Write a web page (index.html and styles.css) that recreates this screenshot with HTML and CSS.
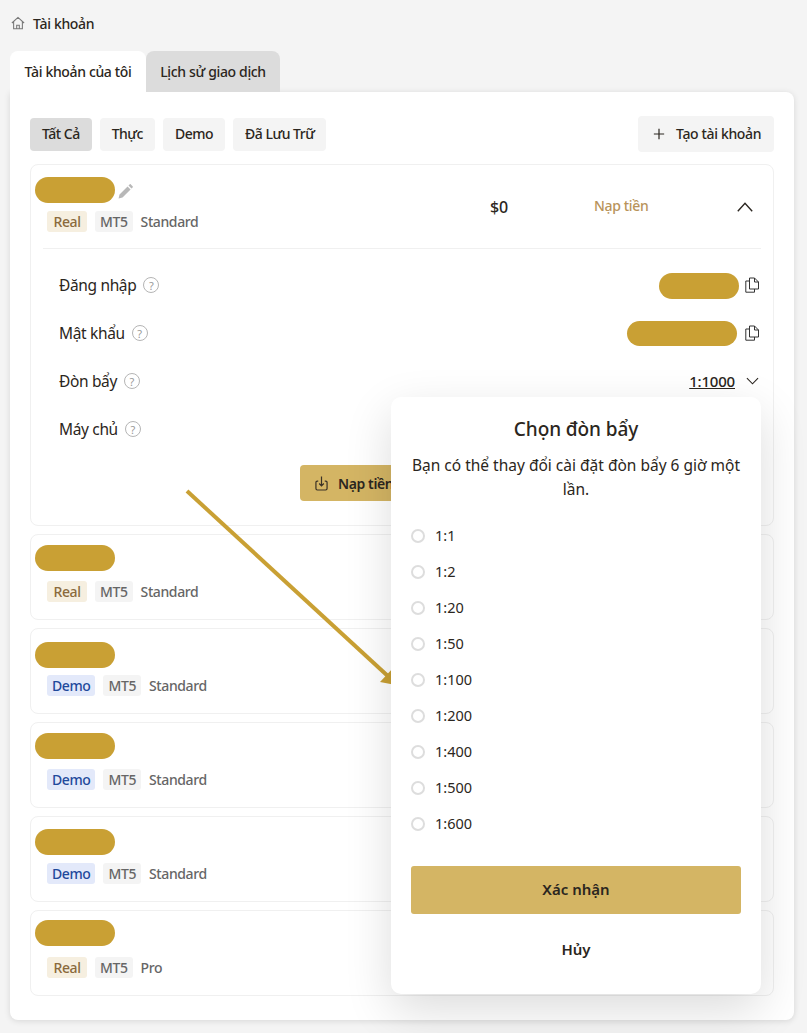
FILE: index.html
```html
<!DOCTYPE html>
<html>
<head>
<title>Tài khoản</title>
<link rel="stylesheet" href="styles.css">
</head>
<body>
<div class="breadcrumb">
  <svg class="home-icon" viewBox="0 0 16 16"><path d="M1 8 8 1.6 15 8M3 6.4V14.5H13V6.4M6.5 14.5V10.5H9.5V14.5"/></svg>
  <span>Tài khoản</span>
</div>

<div class="tabs">
  <div class="tab active">Tài khoản của tôi</div>
  <div class="tab">Lịch sử giao dịch</div>
</div>

<div class="panel">
  <div class="toolbar">
    <div class="filters">
      <div class="filter selected">Tất Cả</div>
      <div class="filter">Thực</div>
      <div class="filter">Demo</div>
      <div class="filter">Đã Lưu Trữ</div>
    </div>
    <div class="create-btn">
      <svg class="plus-icon" viewBox="0 0 14 14"><path d="M7 1V13M1 7H13"/></svg>
      <span>Tạo tài khoản</span>
    </div>
  </div>

  <div class="account open">
    <div class="account-head">
      <div class="account-info">
        <div class="name-slot slot-13">
          <div class="pill name-pill"></div>
          <svg class="pencil-icon" viewBox="0 0 16 16"><path d="M.6 15.4l1-4.2 8.6-8.6 3.2 3.2-8.6 8.6zM11.2 1.6 12.4.4c.4-.4.9-.4 1.3 0l1.9 1.9c.4.4.4.9 0 1.3l-1.2 1.2z"/></svg>
        </div>
        <div class="tags">
          <span class="tag real">Real</span>
          <span class="tag platform">MT5</span>
          <span class="plan">Standard</span>
        </div>
      </div>
      <div class="balance">$0</div>
      <div class="deposit-link">Nạp tiền</div>
      <svg class="chevron-up" viewBox="0 0 16 10"><path d="M.8 9.2 8 1.4l7.2 7.8"/></svg>
    </div>
    <div class="details">
      <div class="detail-row">
        <div class="detail-label">Đăng nhập <span class="help">?</span></div>
        <div class="detail-value">
          <div class="pill login-pill"></div>
          <svg class="copy-icon" viewBox="0 0 14 16"><path d="M4.5 1H9.5L13.5 5V12H4.5zM9.5 1V5H13.5M4.5 4H.8V15.2H9.5V12"/></svg>
        </div>
      </div>
      <div class="detail-row">
        <div class="detail-label">Mật khẩu <span class="help">?</span></div>
        <div class="detail-value">
          <div class="pill password-pill"></div>
          <svg class="copy-icon" viewBox="0 0 14 16"><path d="M4.5 1H9.5L13.5 5V12H4.5zM9.5 1V5H13.5M4.5 4H.8V15.2H9.5V12"/></svg>
        </div>
      </div>
      <div class="detail-row">
        <div class="detail-label">Đòn bẩy <span class="help">?</span></div>
        <div class="detail-value">
          <span class="leverage">1:1000</span>
          <svg class="chevron-down" viewBox="0 0 14 8"><path d="M1 1l6 6 6-6"/></svg>
        </div>
      </div>
      <div class="detail-row">
        <div class="detail-label">Máy chủ <span class="help">?</span></div>
      </div>
    </div>
    <div class="account-actions">
      <div class="deposit-btn">
        <svg class="deposit-icon" viewBox="0 0 14 16"><path d="M3.5 5.5H2.5Q1 5.5 1 7V13.5Q1 15 2.5 15H11.5Q13 15 13 13.5V7Q13 5.5 11.5 5.5H10.5M7 .5V10.5M4.5 8 7 10.5 9.5 8"/></svg>
        <span>Nạp tiền</span>
      </div>
    </div>
  </div>

  <div class="account">
    <div class="name-slot slot-11"><div class="pill name-pill"></div></div>
    <div class="tags"><span class="tag real">Real</span><span class="tag platform">MT5</span><span class="plan">Standard</span></div>
  </div>
  <div class="account">
    <div class="name-slot slot-14"><div class="pill name-pill"></div></div>
    <div class="tags"><span class="tag demo">Demo</span><span class="tag platform">MT5</span><span class="plan">Standard</span></div>
  </div>
  <div class="account">
    <div class="name-slot slot-11"><div class="pill name-pill"></div></div>
    <div class="tags"><span class="tag demo">Demo</span><span class="tag platform">MT5</span><span class="plan">Standard</span></div>
  </div>
  <div class="account">
    <div class="name-slot slot-13"><div class="pill name-pill"></div></div>
    <div class="tags"><span class="tag demo">Demo</span><span class="tag platform">MT5</span><span class="plan">Standard</span></div>
  </div>
  <div class="account">
    <div class="name-slot slot-10"><div class="pill name-pill"></div></div>
    <div class="tags"><span class="tag real">Real</span><span class="tag platform">MT5</span><span class="plan">Pro</span></div>
  </div>
</div>

<svg class="arrow" viewBox="0 0 807 1033"><path class="arrow-line" d="M187 491 390 678"/><path class="arrow-head" d="M401 686 380 682 394 667z"/></svg>

<div class="leverage-modal">
  <h2>Chọn đòn bẩy</h2>
  <p>Bạn có thể thay đổi cài đặt đòn bẩy 6 giờ một lần.</p>
  <div class="options">
    <div class="option"><span class="radio"></span>1:1</div>
    <div class="option"><span class="radio"></span>1:2</div>
    <div class="option"><span class="radio"></span>1:20</div>
    <div class="option"><span class="radio"></span>1:50</div>
    <div class="option"><span class="radio"></span>1:100</div>
    <div class="option"><span class="radio"></span>1:200</div>
    <div class="option"><span class="radio"></span>1:400</div>
    <div class="option"><span class="radio"></span>1:500</div>
    <div class="option"><span class="radio"></span>1:600</div>
  </div>
  <div class="confirm-btn">Xác nhận</div>
  <div class="cancel-btn">Hủy</div>
</div>
</body>
</html>
```

FILE: styles.css
```css
body {
  font-family: "Noto Sans", Roboto, sans-serif;
  background-color: #f4f4f4;
  color: #2b2620;
  margin: 0;
  padding: 0 13px 13px 10px;
  position: relative;
  height: 1020px;
  overflow: hidden;
}
svg {
  display: block;
  fill: none;
  flex-shrink: 0;
}

.breadcrumb {
  display: flex;
  align-items: center;
  gap: 8px;
  height: 46px;
  padding-left: 1px;
  font-size: 14px;
  font-weight: 500;
  letter-spacing: -0.35px;
}
.home-icon {
  width: 14px;
  height: 14px;
  stroke: #777;
  stroke-width: 1.2;
}

.tabs {
  display: flex;
  padding-top: 5px;
}
.tab {
  height: 41px;
  width: 134px;
  box-sizing: border-box;
  display: flex;
  align-items: center;
  justify-content: center;
  font-size: 14px;
  font-weight: 500;
  letter-spacing: -0.35px;
  background: #dcdcdc;
  border-radius: 8px 8px 0 0;
}
.tab.active {
  width: 136px;
  background: #fff;
}

.panel {
  background: #fff;
  border-radius: 0 8px 8px 8px;
  box-shadow: 0 1px 6px rgba(0, 0, 0, 0.12);
  padding: 24px 20px;
  height: 928px;
  box-sizing: border-box;
}
.toolbar {
  display: flex;
  justify-content: space-between;
  align-items: center;
  margin-bottom: 12px;
}
.filters {
  display: flex;
  gap: 8px;
}
.filter {
  height: 33px;
  padding: 0 12px 1px;
  box-sizing: border-box;
  display: flex;
  align-items: center;
  font-size: 14px;
  font-weight: 500;
  letter-spacing: -0.5px;
  background: #f4f4f4;
  border-radius: 4px;
}
.filter.selected {
  background: #dcdcdc;
}
.create-btn {
  width: 136px;
  height: 36px;
  box-sizing: border-box;
  padding: 0 0 1px 15px;
  display: flex;
  align-items: center;
  gap: 11px;
  font-size: 14px;
  font-weight: 500;
  letter-spacing: -0.35px;
  background: #f4f4f4;
  border-radius: 4px;
}
.plus-icon {
  width: 12px;
  height: 12px;
  stroke: #2b2620;
  stroke-width: 1.4;
}

.account {
  border: 1px solid #f0f0f0;
  border-radius: 8px;
  height: 86px;
  box-sizing: border-box;
  margin-bottom: 8px;
  padding: 0 12px 0 16px;
}
.account.open {
  height: 362px;
  position: relative;
}
.account-head {
  display: flex;
  align-items: flex-start;
  height: 83px;
  margin: 0 0 0 -4px;
  padding-left: 4px;
  border-bottom: 1px solid #f0f0f0;
}
.account-info {
  width: 443px;
}
.name-slot {
  height: 46px;
  box-sizing: border-box;
  display: flex;
  align-items: flex-start;
  gap: 3px;
}
.slot-10 { padding-top: 9px; }
.slot-11 { padding-top: 10px; }
.slot-13 { padding-top: 12px; }
.slot-14 { padding-top: 13px; }
.pill {
  background: #c9a034;
  border-radius: 13px;
  height: 26px;
}
.name-pill {
  width: 80px;
  margin-left: -12px;
}
.pencil-icon {
  width: 15px;
  height: 15px;
  margin-top: 7px;
  fill: #b8b8b8;
}
.tags {
  display: flex;
  align-items: center;
  gap: 8px;
  height: 21px;
  font-size: 14px;
  font-weight: 500;
  letter-spacing: -0.4px;
}
.tag {
  height: 21px;
  box-sizing: border-box;
  padding: 0 6px 1px;
  display: flex;
  align-items: center;
  border-radius: 3px;
}
.tag.real {
  padding: 0 6.5px 1px;
  background: #f6efe0;
  color: #8a6a3c;
}
.tag.demo {
  padding: 0 5px 1px;
  background: #e3e9fa;
  color: #1f4a9c;
}
.tag.platform {
  padding: 0 5px 1px;
  background: #f4f4f4;
  color: #666;
}
.plan {
  color: #666;
  padding-bottom: 1px;
}
.balance {
  width: 104px;
  margin-top: 31px;
  font-size: 16px;
  font-weight: 500;
  letter-spacing: -0.2px;
}
.deposit-link {
  width: 143px;
  margin-top: 31px;
  font-size: 14px;
  font-weight: 500;
  letter-spacing: -0.35px;
  color: #b8935a;
}
.chevron-up {
  width: 16px;
  height: 10px;
  margin-top: 37px;
  stroke: #2b2620;
  stroke-width: 1.4;
}

.details {
  padding: 12px 2px 0 12px;
}
.detail-row {
  height: 48px;
  display: flex;
  align-items: center;
  justify-content: space-between;
}
.detail-label {
  display: flex;
  align-items: center;
  gap: 7px;
  margin-top: -1px;
  font-size: 15.5px;
  letter-spacing: -0.35px;
}
.help {
  width: 14px;
  height: 14px;
  margin-top: 1px;
  border: 1px solid #b5b5b5;
  border-radius: 50%;
  color: #999;
  font-size: 11px;
  letter-spacing: 0;
  display: flex;
  align-items: center;
  justify-content: center;
}
.detail-value {
  display: flex;
  align-items: center;
  gap: 6px;
}
.login-pill {
  width: 80px;
  margin-top: 1px;
}
.password-pill {
  width: 110px;
  height: 25px;
  margin-right: 2px;
}
.copy-icon {
  width: 14px;
  height: 16px;
  stroke: #333;
  stroke-width: 1;
}
.leverage {
  font-size: 15px;
  font-weight: 500;
  letter-spacing: -0.2px;
  text-decoration: underline;
  margin-right: 5px;
}
.chevron-down {
  width: 13px;
  height: 8px;
  stroke: #2b2620;
  stroke-width: 1.2;
}
.account-actions {
  padding: 12px 0 0 253px;
}
.deposit-btn {
  width: 180px;
  height: 36px;
  box-sizing: border-box;
  padding-left: 15px;
  display: flex;
  align-items: center;
  gap: 10px;
  font-size: 14px;
  font-weight: 600;
  letter-spacing: -0.4px;
  background: #d4b564;
  border-radius: 4px;
}
.deposit-icon {
  width: 13px;
  height: 15px;
  stroke: #3a3226;
  stroke-width: 1.3;
}

.arrow {
  position: absolute;
  left: 0;
  top: 0;
  width: 807px;
  height: 1033px;
}
.arrow-line {
  stroke: #c9a034;
  stroke-width: 4;
}
.arrow-head {
  fill: #c9a034;
}

.leverage-modal {
  position: absolute;
  left: 391px;
  top: 397px;
  width: 370px;
  height: 597px;
  box-sizing: border-box;
  padding: 20px 20px 0;
  background: #fff;
  border-radius: 10px;
  box-shadow: 0 16px 48px rgba(0, 0, 0, 0.14);
  text-align: center;
}
.leverage-modal h2 {
  margin: 0;
  font-size: 19px;
  line-height: 24px;
  font-weight: 500;
  letter-spacing: -0.1px;
}
.leverage-modal p {
  margin: 12px 0 0;
  font-size: 15.5px;
  line-height: 24px;
}
.options {
  margin-top: 17px;
}
.option {
  display: flex;
  align-items: center;
  gap: 10px;
  height: 36px;
  box-sizing: border-box;
  padding-bottom: 2px;
  font-size: 14.5px;
}
.radio {
  width: 10px;
  height: 10px;
  margin-top: 2px;
  border: 2px solid #ddd;
  border-radius: 50%;
}
.confirm-btn {
  margin-top: 24px;
  height: 48px;
  box-sizing: border-box;
  padding-bottom: 2px;
  display: flex;
  align-items: center;
  justify-content: center;
  background: #d4b564;
  border-radius: 3px;
  font-size: 15px;
  font-weight: 600;
}
.cancel-btn {
  margin-top: 25px;
  font-size: 15px;
  font-weight: 600;
}
```
